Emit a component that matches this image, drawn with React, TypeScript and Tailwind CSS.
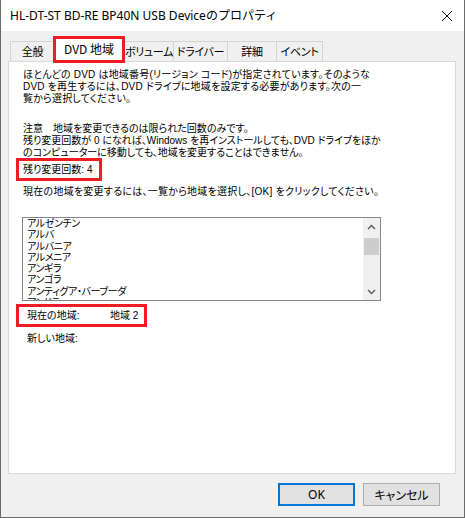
import React from 'react';

const jp = "font-['Noto_Sans_CJK_JP',sans-serif]";
const ui = "font-['Noto_Sans','Noto_Sans_CJK_JP',sans-serif]";
const body = "font-['Liberation_Sans','Noto_Sans_CJK_JP',sans-serif]";

const regions = [
  'アルゼンチン',
  'アルバ',
  'アルバニア',
  'アルメニア',
  'アンギラ',
  'アンゴラ',
  'アンティグア・バーブーダ',
  'アンドラ',
];

const Tab: React.FC<{ label: string; w: string; first?: boolean }> = ({ label, w, first }) => (
  <div
    className={`${w} h-[20px] border-t border-r border-[#d4d4d4] ${first ? 'border-l' : ''} bg-[#f0f0f0] flex items-center justify-center whitespace-nowrap text-[11px] tracking-[-0.3px] text-black ${jp} [font-feature-settings:'palt']`}
  >
    {label}
  </div>
);

const App: React.FC = () => {
  return (
    <div className="w-[465px] h-[518px] bg-[#f0f0f0] border-x border-b border-[#6b6b6b] flex flex-col">
      {/* title bar */}
      <div className="h-[31px] bg-white flex items-center justify-between pl-[9px] pr-[5px]">
        <span className={`text-[12px] text-black ${ui}`}>HL-DT-ST BD-RE BP40N USB Deviceのプロパティ</span>
        <svg width="12" height="12" viewBox="0 0 12 12" className="mr-[6px]">
          <path d="M1 1 L11 11 M11 1 L1 11" stroke="#111" strokeWidth="1" />
        </svg>
      </div>

      {/* tabs */}
      <div className="mt-[5px] ml-[9px] h-[25px] flex items-end">
        <Tab label="全般" w="w-[45px]" first />
        <div className="relative z-10 -ml-[2px] -mb-[2px] w-[72px] h-[27px] border-[3px] border-[#f01c24] bg-white flex items-center justify-center pb-[2px]">
          <span className={`text-[12px] text-black ${jp}`}>DVD 地域</span>
        </div>
        <Tab label="ボリューム" w="w-[49px]" />
        <Tab label="ドライバー" w="w-[54px]" />
        <Tab label="詳細" w="w-[49px]" />
        <Tab label="イベント" w="w-[46px]" />
      </div>

      {/* panel */}
      <div className={`ml-[7px] w-[448px] h-[413px] bg-white border border-[#d9d9d9] pt-[7px] text-[10px] leading-[12px] text-black ${body} [font-feature-settings:'palt']`}>
        <p className="pl-[14px] whitespace-nowrap tracking-[0.2px]">
          ほとんどの DVD は地域番号(リージョン コード)が指定されています。そのような<br />
          DVD を再生するには、DVD ドライブに地域を設定する必要があります。次の一<br />
          覧から選択してください。
        </p>
        <p className="pl-[14px] mt-[18px] whitespace-nowrap">
          注意　地域を変更できるのは限られた回数のみです。<br />
          残り変更回数が 0 になれば、Windows を再インストールしても、DVD ドライブをほか<br />
          のコンピューターに移動しても、地域を変更することはできません。
        </p>
        <div className="-mt-[1px] ml-[7px] w-[86px] h-[23px] border-[3px] border-[#f01c24] pl-[4px] pt-[3px] whitespace-nowrap">
          残り変更回数: 4
        </div>
        <p className="pl-[14px] mt-[5px] whitespace-nowrap tracking-[0.25px]">
          現在の地域を変更するには、一覧から地域を選択し、[OK] をクリックしてください。
        </p>

        {/* list box */}
        <div className="mt-[19px] ml-[13px] w-[359px] h-[84px] border border-[#828790] flex overflow-hidden">
          <div className="flex-1 pl-[4px] text-[10px] leading-[11.3px] tracking-[-0.4px] overflow-hidden">
            {regions.map((r) => (
              <div key={r} className="whitespace-nowrap">{r}</div>
            ))}
          </div>
          <div className="w-[17px] bg-[#f0f0f0] flex flex-col">
            <div className="h-[17px] flex items-center justify-center">
              <svg width="9" height="6" viewBox="0 0 9 6">
                <path d="M1 5 L4.5 1.5 L8 5" fill="none" stroke="#606060" strokeWidth="1.5" />
              </svg>
            </div>
            <div className="mt-[3px] mx-[1px] h-[17px] bg-[#cdcdcd]" />
            <div className="flex-1" />
            <div className="h-[17px] flex items-center justify-center">
              <svg width="9" height="6" viewBox="0 0 9 6">
                <path d="M1 1 L4.5 4.5 L8 1" fill="none" stroke="#606060" strokeWidth="1.5" />
              </svg>
            </div>
          </div>
        </div>

        <div className="mt-[3px] ml-[7px] w-[131px] h-[23px] border-[3px] border-[#f01c24] pl-[8px] pt-[3px] flex whitespace-nowrap">
          <span className="w-[83px] shrink-0">現在の地域:</span>
          <span>地域 2</span>
        </div>
        <p className="pl-[18px] mt-[6px]">新しい地域:</p>
      </div>

      {/* buttons */}
      <div className="mt-[9px] flex justify-end pr-[24px] gap-[8px]">
        <button className={`w-[77px] h-[23px] bg-[#e1e1e1] border-2 border-[#0078d7] text-[12px] text-black ${ui}`}>OK</button>
        <button className={`w-[77px] h-[23px] bg-[#e1e1e1] border border-[#adadad] text-[12px] text-black ${jp} [font-feature-settings:'palt']`}>キャンセル</button>
      </div>
    </div>
  );
};

export default App;
